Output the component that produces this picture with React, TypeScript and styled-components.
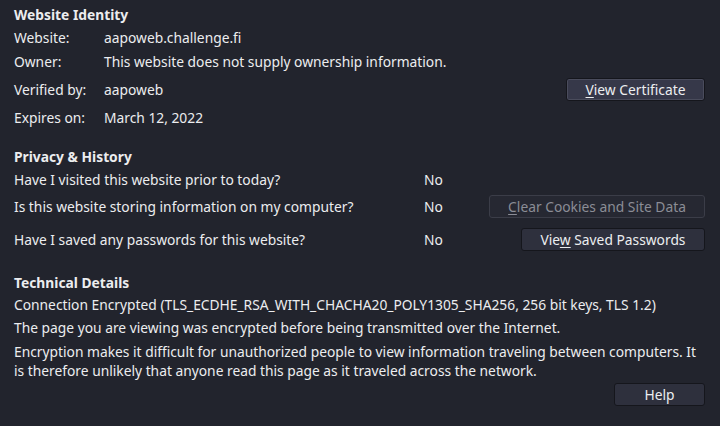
import React from "react";
import styled, { createGlobalStyle } from "styled-components";

const Global = createGlobalStyle`
  html, body { margin: 0; padding: 0; background: #22242d; }
  body {
    font-family: "Noto Sans", "Open Sans", sans-serif;
    font-size: 13.8px;
    color: #ecedef;
  }
`;

const Page = styled.div`
  width: 720px;
  height: 426px;
  box-sizing: border-box;
  padding: 4px 15px 0 14px;
  background: #22242d;
  display: flex;
  flex-direction: column;
  overflow: hidden;
`;

const Section = styled.section<{ $mt?: number }>`
  display: flex;
  flex-direction: column;
  margin-top: ${(p) => p.$mt ?? 0}px;
`;

const Heading = styled.h2`
  margin: 0;
  font-size: 13.8px;
  font-weight: 700;
  line-height: 22px;
  height: 21px;
`;

const Row = styled.div<{ $h: number }>`
  display: flex;
  align-items: center;
  height: ${(p) => p.$h}px;
  white-space: nowrap;
`;

const Label = styled.span`
  width: 90px;
  flex: none;
`;

const Value = styled.span`
  flex: 1;
`;

const Question = styled.span`
  width: 410px;
  flex: none;
`;

const Answer = styled.span`
  flex: 1;
`;

const Button = styled.button<{ $focused?: boolean; $w: number }>`
  font-family: inherit;
  font-size: 13.8px;
  color: #eceef0;
  border: 1px solid #15161c;
  border-radius: 3px;
  width: ${(p) => p.$w}px;
  height: 23px;
  padding: 0 8px;
  box-sizing: border-box;
  line-height: 19px;
  white-space: nowrap;
  box-shadow: ${(p) => (p.$focused ? "inset 0 0 0 1px #4a4c5c" : "none")};
  background: ${(p) => (p.$focused ? "#363849" : "#2e303d")};
  &:disabled {
    color: #8b8d96;
    background: #262832;
    border-color: #3b3d48;
  }
`;

const Key = styled.span`
  text-decoration: underline;
  text-underline-offset: 2px;
`;

const Para = styled.p<{ $mt?: number }>`
  margin: ${(p) => p.$mt ?? 0}px 0 0;
  line-height: 19px;
  white-space: nowrap;
`;

const Footer = styled.div`
  display: flex;
  justify-content: flex-end;
  margin-top: 3px;
`;

export default function App() {
  return (
    <>
      <Global />
      <Page>
        <Section>
          <Heading>Website Identity</Heading>
          <Row $h={24}>
            <Label>Website:</Label>
            <Value>aapoweb.challenge.fi</Value>
          </Row>
          <Row $h={24}>
            <Label>Owner:</Label>
            <Value>This website does not supply ownership information.</Value>
          </Row>
          <Row $h={32}>
            <Label>Verified by:</Label>
            <Value>aapoweb</Value>
            <Button $focused $w={139}>
              <Key>V</Key>iew Certificate
            </Button>
          </Row>
          <Row $h={24}>
            <Label>Expires on:</Label>
            <Value>March 12, 2022</Value>
          </Row>
        </Section>

        <Section $mt={17}>
          <Heading>Privacy &amp; History</Heading>
          <Row $h={24}>
            <Question>Have I visited this website prior to today?</Question>
            <Answer>No</Answer>
          </Row>
          <Row $h={31}>
            <Question>Is this website storing information on my computer?</Question>
            <Answer>No</Answer>
            <Button disabled $w={216}>
              <Key>C</Key>lear Cookies and Site Data
            </Button>
          </Row>
          <Row $h={35}>
            <Question>Have I saved any passwords for this website?</Question>
            <Answer>No</Answer>
            <Button $w={184}>
              Vie<Key>w</Key> Saved Passwords
            </Button>
          </Row>
        </Section>

        <Section $mt={15}>
          <Heading>Technical Details</Heading>
          <Para $mt={2}>
            Connection Encrypted (TLS_ECDHE_RSA_WITH_CHACHA20_POLY1305_SHA256, 256 bit keys, TLS 1.2)
          </Para>
          <Para $mt={4}>The page you are viewing was encrypted before being transmitted over the Internet.</Para>
          <Para $mt={5}>
            Encryption makes it difficult for unauthorized people to view information traveling between computers. It
            <br />
            is therefore unlikely that anyone read this page as it traveled across the network.
          </Para>
        </Section>

        <Footer>
          <Button $w={91}>Help</Button>
        </Footer>
      </Page>
    </>
  );
}
